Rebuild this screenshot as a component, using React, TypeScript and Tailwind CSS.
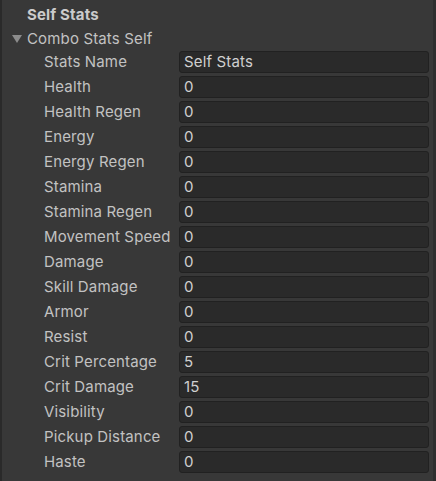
import React from 'react';

const fields: { label: string; value: string }[] = [
  { label: 'Stats Name', value: 'Self Stats' },
  { label: 'Health', value: '0' },
  { label: 'Health Regen', value: '0' },
  { label: 'Energy', value: '0' },
  { label: 'Energy Regen', value: '0' },
  { label: 'Stamina', value: '0' },
  { label: 'Stamina Regen', value: '0' },
  { label: 'Movement Speed', value: '0' },
  { label: 'Damage', value: '0' },
  { label: 'Skill Damage', value: '0' },
  { label: 'Armor', value: '0' },
  { label: 'Resist', value: '0' },
  { label: 'Crit Percentage', value: '5' },
  { label: 'Crit Damage', value: '15' },
  { label: 'Visibility', value: '0' },
  { label: 'Pickup Distance', value: '0' },
  { label: 'Haste', value: '0' },
];

const App: React.FC = () => {
  return (
    <div
      className="w-[436px] h-[481px] bg-[#383838] border-l-2 border-l-[#2a2a2a] border-r-[3px] border-r-[#2e2e2e] text-[15px] tracking-[0.15px] text-[#c2c2c2] overflow-hidden"
      style={{ fontFamily: 'Inter, "Noto Sans", sans-serif' }}
    >
      <div className="h-[25px] mt-[3px] pl-[25px] flex items-center font-bold text-[#cbcbcb]">
        Self Stats
      </div>
      <div className="h-[22px] pl-[10px] flex items-center">
        <svg width="10" height="9" viewBox="0 0 10 9" className="mr-[5px]">
          <polygon points="0,0 10,0 5,8" fill="#8c8c8c" />
        </svg>
        <span>Combo Stats Self</span>
      </div>
      <div className="flex flex-col gap-[3px] pt-px">
        {fields.map((f) => (
          <div key={f.label} className="flex items-center h-[22px]">
            <div className="w-[177px] pl-[42px] shrink-0 whitespace-nowrap">{f.label}</div>
            <div className="w-[250px] h-[22px] rounded-[3px] bg-[#2a2a2a] border border-[#212121] flex items-center pl-[4px] text-[#d0d0d0]">
              {f.value}
            </div>
          </div>
        ))}
      </div>
    </div>
  );
};

export default App;
